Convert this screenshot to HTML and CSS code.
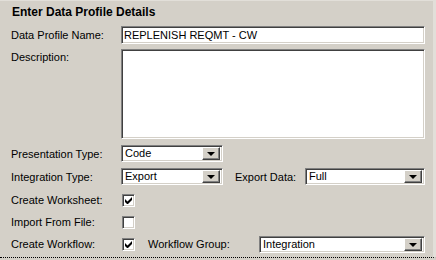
FILE: index.html
```html
<!DOCTYPE html>
<html lang="en">
<head>
  <meta charset="UTF-8" />
  <title>Enter Data Profile Details</title>
  <link rel="stylesheet" href="styles.css">
</head>
<body>

  <div class="panel">
    <div class="title">Enter Data Profile Details</div>

    <div class="row row-name">
      <label class="lbl">Data Profile Name:</label>
      <div class="field wide">REPLENISH REQMT - CW</div>
    </div>

    <div class="row row-desc">
      <label class="lbl">Description:</label>
      <div class="field wide memo"></div>
    </div>

    <div class="row row-pres">
      <label class="lbl">Presentation Type:</label>
      <div class="combo short">
        <span class="val">Code</span>
        <span class="btn"><i class="arrow"></i></span>
      </div>
    </div>

    <div class="row row-int">
      <label class="lbl">Integration Type:</label>
      <div class="combo short">
        <span class="val">Export</span>
        <span class="btn"><i class="arrow"></i></span>
      </div>
      <label class="lbl2 export-lbl">Export Data:</label>
      <div class="combo grow">
        <span class="val">Full</span>
        <span class="btn"><i class="arrow"></i></span>
      </div>
    </div>

    <div class="row check-row first-check">
      <label class="lbl">Create Worksheet:</label>
      <span class="check on">
        <svg width="7" height="7" viewBox="0 0 7 7"><path d="M0 2v3l2 2h1l4-4V0L2.5 4.5z" fill="#000"/></svg>
      </span>
    </div>

    <div class="row check-row">
      <label class="lbl">Import From File:</label>
      <span class="check"></span>
    </div>

    <div class="row check-row">
      <label class="lbl">Create Workflow:</label>
      <span class="check on">
        <svg width="7" height="7" viewBox="0 0 7 7"><path d="M0 2v3l2 2h1l4-4V0L2.5 4.5z" fill="#000"/></svg>
      </span>
      <label class="lbl2 wf-lbl">Workflow Group:</label>
      <div class="combo grow">
        <span class="val">Integration</span>
        <span class="btn"><i class="arrow"></i></span>
      </div>
    </div>
  </div>

</body>
</html>
```

FILE: styles.css
```css
body {
  margin: 0;
  background: #d4d0c8;
  font-family: 'Liberation Sans', Arial, sans-serif;
  font-size: 11px;
  color: #000;
}

.panel {
  height: 256px;
  border-top: 1px solid #e2dfd9;
  border-right: 3px solid #e2dfd9;
  border-bottom: 1px dotted #000;
  box-sizing: content-box;
  width: 433px;
}

.title {
  height: 24px;
  padding: 4px 0 0 12px;
  box-sizing: border-box;
  font-weight: bold;
  font-size: 12px;
}

.row {
  display: flex;
  align-items: center;
  padding-left: 11px;
  padding-right: 8px;
}

.lbl {
  width: 110px;
  flex: none;
}

.lbl2 {
  flex: none;
}

.row-name {
  margin-top: 1px;
}

.row-desc {
  margin-top: 5px;
  align-items: flex-start;
}

.row-desc .lbl {
  padding-top: 2px;
}

.row-pres {
  margin-top: 6px;
}

.row-int {
  margin-top: 6px;
}

/* sunken win32 edit box */
.field {
  box-sizing: border-box;
  height: 18px;
  background: #fff;
  border-top: 1px solid #808080;
  border-left: 1px solid #808080;
  border-right: 1px solid #fff;
  border-bottom: 1px solid #fff;
  box-shadow: inset 1px 1px 0 #404040, inset -1px -1px 0 #d4d0c8;
  padding: 2px 2px;
  line-height: 13px;
}

.wide {
  flex: 1;
}

.memo {
  height: 90px;
}

.combo {
  box-sizing: border-box;
  height: 17px;
  display: flex;
  background: #fff;
  border-top: 1px solid #808080;
  border-left: 1px solid #808080;
  border-right: 1px solid #fff;
  border-bottom: 1px solid #fff;
  box-shadow: inset 1px 1px 0 #404040, inset -1px -1px 0 #d4d0c8;
  padding: 2px 2px 2px 3px;
}

.combo .val {
  flex: 1;
  line-height: 11px;
}

.combo .btn {
  width: 16px;
  height: 11px;
  flex: none;
  background: #d4d0c8;
  border-top: 1px solid #fff;
  border-left: 1px solid #fff;
  border-right: 1px solid #404040;
  border-bottom: 1px solid #404040;
  box-shadow: inset -1px -1px 0 #808080;
  display: flex;
  align-items: center;
  justify-content: center;
  box-sizing: content-box;
  margin-top: -1px;
}

.arrow {
  width: 0;
  height: 0;
  border-left: 4px solid transparent;
  border-right: 4px solid transparent;
  border-top: 4px solid #000;
  margin: 1px 0 0 0;
}

.short {
  width: 102px;
}

.grow {
  flex: 1;
}

.export-lbl {
  margin-left: 12px;
  width: 70px;
}

.check-row {
  height: 22px;
}

.first-check {
  margin-top: 4px;
}

.check {
  width: 13px;
  height: 13px;
  box-sizing: border-box;
  background: #fff;
  border-top: 1px solid #808080;
  border-left: 1px solid #808080;
  border-right: 1px solid #fff;
  border-bottom: 1px solid #fff;
  box-shadow: inset 1px 1px 0 #404040, inset -1px -1px 0 #d4d0c8;
  display: flex;
  align-items: center;
  justify-content: center;
  margin-left: 1px;
}

.check svg {
  display: block;
}

.wf-lbl {
  margin-left: 13px;
  width: 111px;
}
```
